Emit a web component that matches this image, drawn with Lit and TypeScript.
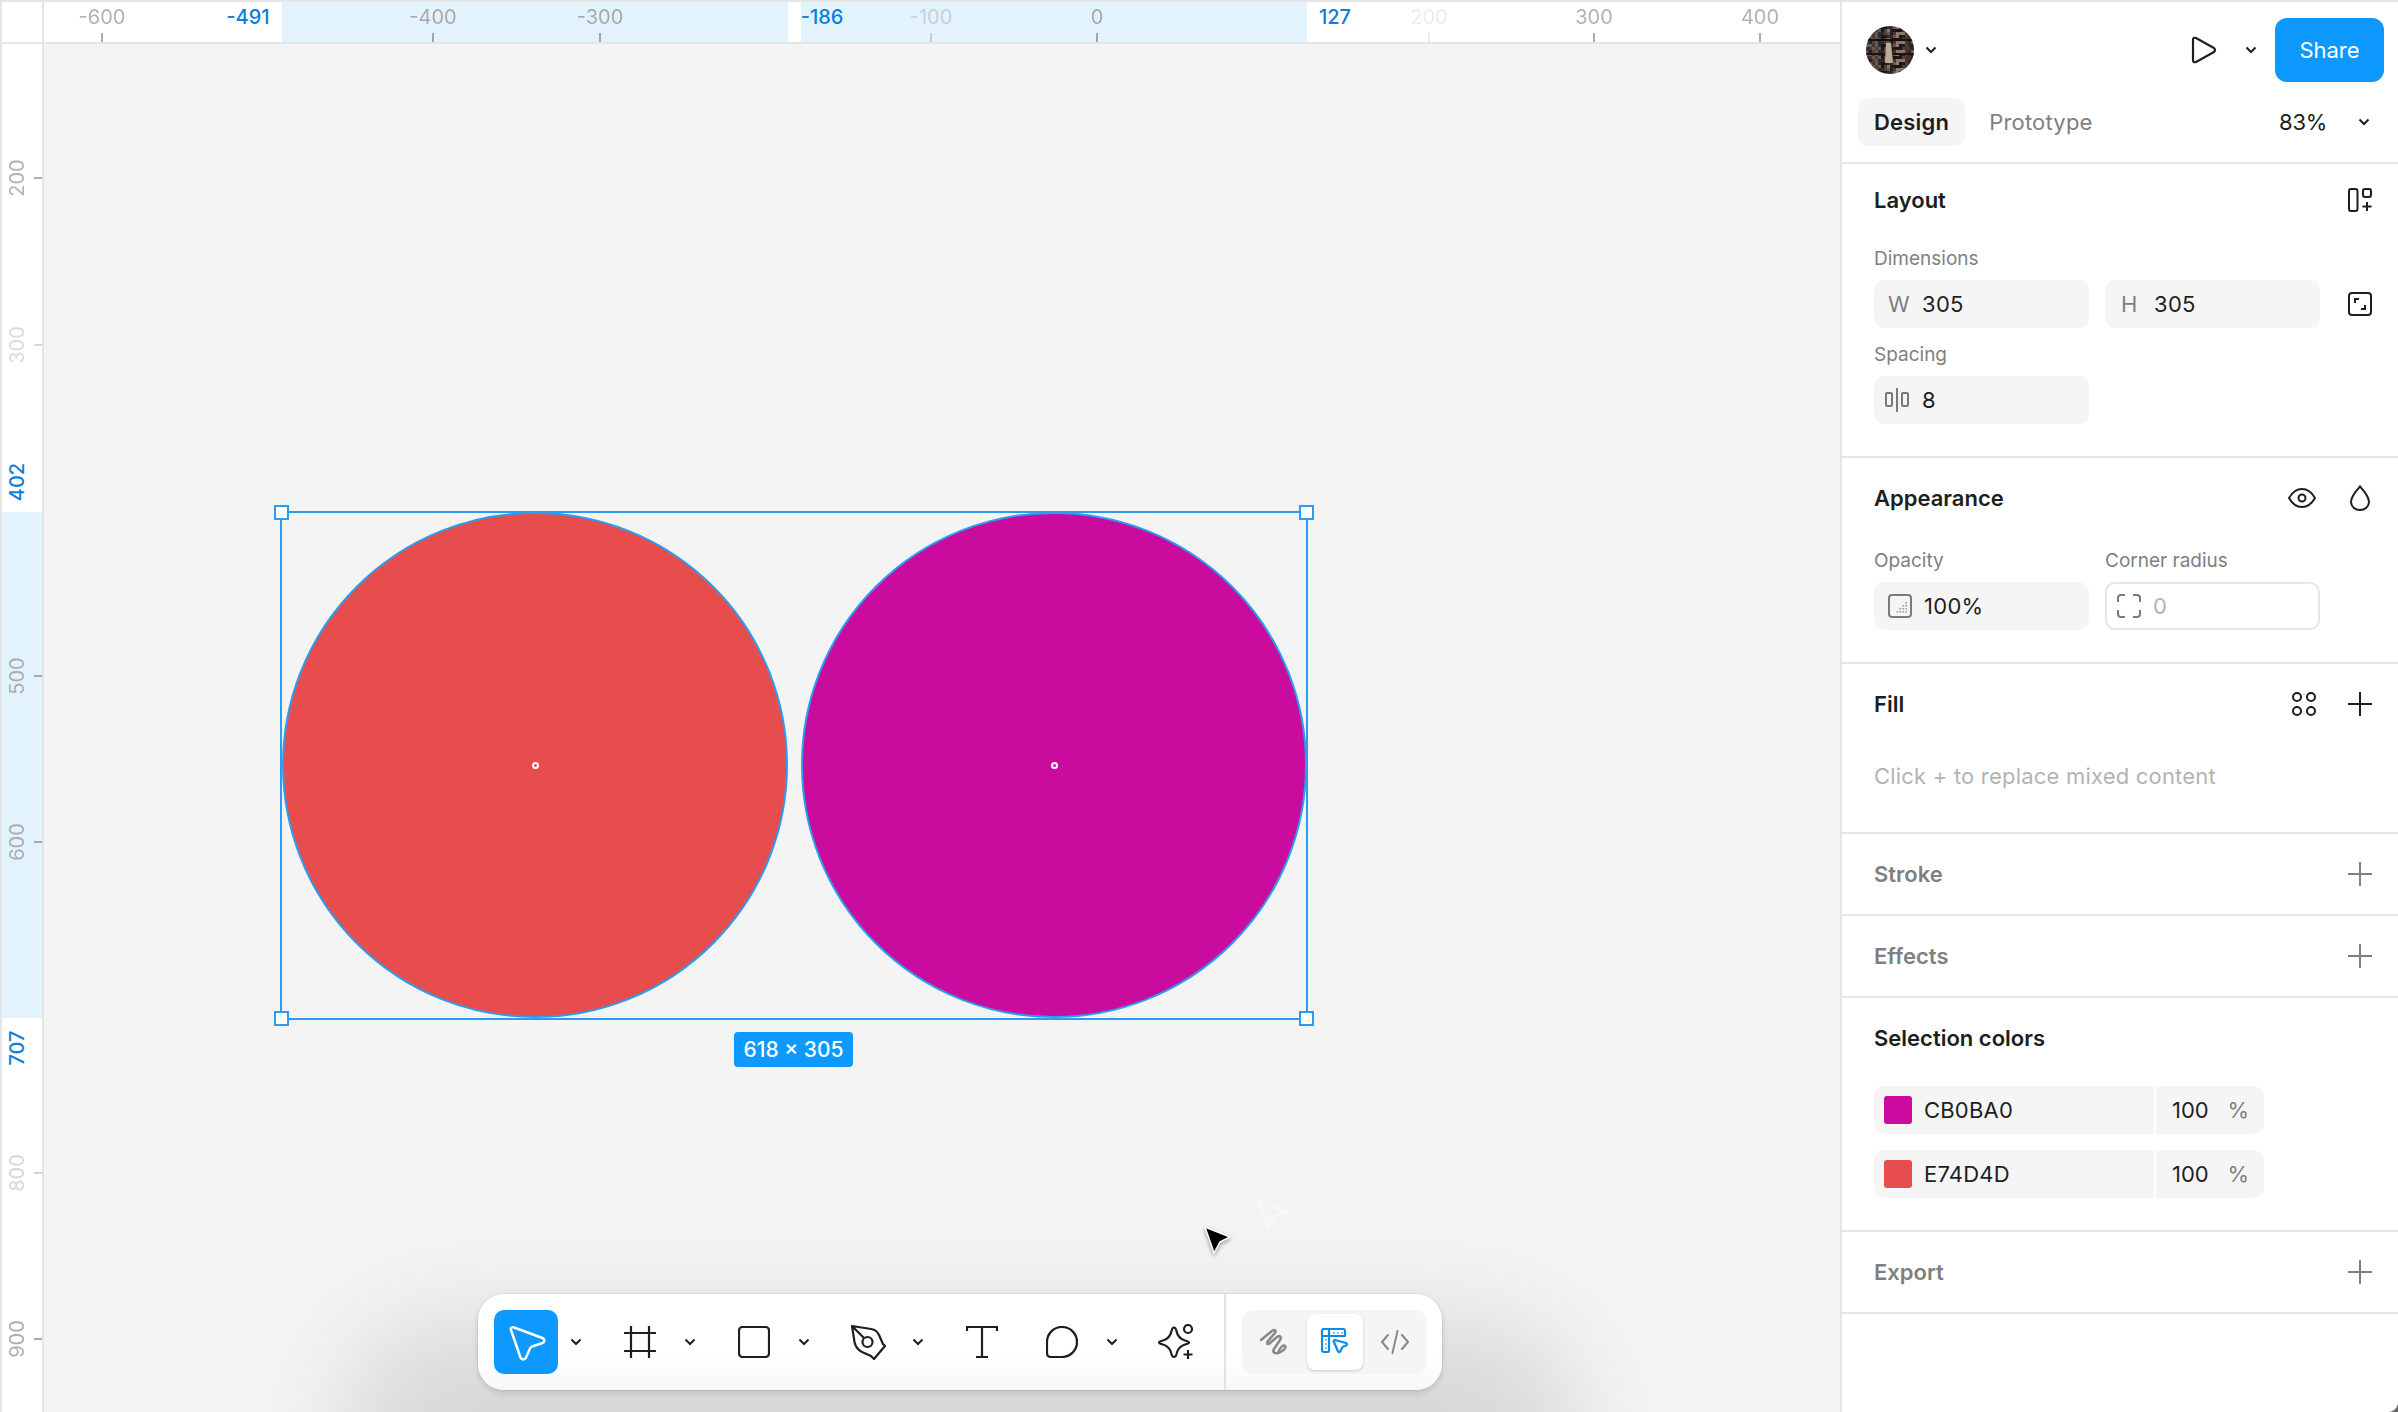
import { LitElement, css, html, svg } from "lit";
import { customElement } from "lit/decorators.js";

const chevron = html`<svg class="chev" width="12" height="8" viewBox="0 0 12 8"><path d="M1.5 1.5 6 6l4.5-4.5" /></svg>`;
const plus = html`<svg class="ico" width="24" height="24" viewBox="0 0 24 24"><path d="M12 0v24M0 12h24" /></svg>`;
const plusDim = html`<svg class="ico dim" width="24" height="24" viewBox="0 0 24 24"><path d="M12 0v24M0 12h24" /></svg>`;

// [value, x or y in page pixels, opacity]
const topTicks: [string, number, number][] = [
  ["-600", 102, 0.85],
  ["-400", 433, 0.95],
  ["-300", 600, 0.95],
  ["-100", 931, 0.45],
  ["0", 1097, 0.95],
  ["200", 1429, 0.2],
  ["300", 1594, 0.85],
  ["400", 1760, 0.85],
];
const topMarks: [string, number][] = [
  ["-491", 248],
  ["-186", 822],
  ["127", 1335],
];
const leftTicks: [string, number, number][] = [
  ["200", 178, 0.85],
  ["300", 345, 0.4],
  ["500", 676, 0.9],
  ["600", 842, 0.9],
  ["800", 1173, 0.45],
  ["900", 1339, 0.9],
];
const leftMarks: [string, number][] = [
  ["402", 482],
  ["707", 1048],
];

// little bookshelf picture for the avatar
const shelfColors = ["#5a3c30", "#232122", "#7a5547", "#2f2c2e", "#8c776b", "#191718", "#4c342b", "#5f5a57"];
const shelfBits = (() => {
  const out = [];
  let seed = 7;
  for (let y = 0; y < 48; y += 3) {
    for (let x = 0; x < 48; x += 3) {
      seed = (seed * 31 + 11) % 97;
      out.push(svg`<rect x=${x} y=${y} width="3" height="3" fill=${shelfColors[seed % 8]} />`);
    }
  }
  return out;
})();

const opacityDots = (() => {
  const out = [];
  for (let r = 0; r < 4; r++) {
    for (let c = 0; c <= r; c++) {
      out.push(svg`<rect class="dot" x=${17.5 - c * 3} y=${8 + r * 3} width="1.6" height="1.6" />`);
    }
  }
  return out;
})();

@customElement("app-root")
export class AppRoot extends LitElement {
  render() {
    return html`
      <div class="app">
        <div class="work">
          <div class="corner"></div>
          ${this.renderTopRuler()} ${this.renderLeftRuler()}
          <div class="canvas">
            <div class="circle red"></div>
            <div class="circle purple"></div>
            <div class="center-dot" style="left:488px;top:718px"></div>
            <div class="center-dot" style="left:1007px;top:718px"></div>
            <div class="sel"></div>
            ${[
              [230, 461],
              [1255, 461],
              [230, 967],
              [1255, 967],
            ].map(([l, t]) => html`<div class="handle" style="left:${l}px;top:${t}px"></div>`)}
            <div class="size">618 × 305</div>
            <svg class="ghost" width="32" height="30" viewBox="0 0 32 30">
              <path d="M2 2 30 11 18 16 13 28Z" />
            </svg>
            <svg class="cursor" width="27" height="28" viewBox="0 0 27 28">
              <path d="M1 1 26 11 16 16 10 27Z" />
            </svg>
            ${this.renderToolbar()}
          </div>
        </div>
        ${this.renderPanel()}
      </div>
      <div class="win-corner"></div>
    `;
  }

  renderTopRuler() {
    return html`<div class="ruler top">
      <div class="band" style="left:238px;width:506px"></div>
      <div class="band" style="left:757px;width:506px"></div>
      ${topTicks.map(
        ([v, x, o]) => html`
          <span class="num" style="left:${x - 44}px;opacity:${o}">${v}</span>
          <i class="tick" style="left:${x - 45}px;opacity:${o}"></i>
        `,
      )}
      ${topMarks.map(([v, x]) => html`<span class="num mark" style="left:${x - 44}px">${v}</span>`)}
    </div>`;
  }

  renderLeftRuler() {
    return html`<div class="ruler left">
      <div class="band" style="top:468px;height:506px"></div>
      ${leftTicks.map(
        ([v, y, o]) => html`
          <span class="num" style="top:${y - 44}px;opacity:${o}">${v}</span>
          <i class="tick" style="top:${y - 45}px;opacity:${o}"></i>
        `,
      )}
      ${leftMarks.map(([v, y]) => html`<span class="num mark" style="top:${y - 44}px">${v}</span>`)}
    </div>`;
  }

  renderToolbar() {
    return html`<div class="toolbar">
      <div class="tools">
        <div class="tool move">
          <svg width="64" height="64" viewBox="0 0 64 64">
            <path
              d="M17 20c-1-2 1-3.500 3-2.500L48.500 28c2.500 1 2.500 4 0 5L38 36.500c-1 .5-1.500 1-2 2l-4 9c-1 2.500-4.500 2.500-5.500 0Z"
            />
          </svg>
        </div>
        <div class="drop">${chevron}</div>
        <div class="tool">
          <svg class="ti" width="32" height="32" viewBox="0 0 32 32">
            <path d="M7 0v32M25 0v32M0 7h32M0 25h32" />
          </svg>
        </div>
        <div class="drop">${chevron}</div>
        <div class="tool">
          <svg class="ti" width="32" height="32" viewBox="0 0 32 32"><rect x="1" y="1" width="30" height="30" rx="3.500" /></svg>
        </div>
        <div class="drop">${chevron}</div>
        <div class="tool">
          <svg class="ti" width="36" height="36" viewBox="0 0 36 36">
            <path d="M2 2 21 5q6 1 8 6l4 9 2 2-11 13-3-3-9-4q-6-3-7.500-10ZM2 2l12 12" />
            <circle cx="17.500" cy="18" r="5" />
          </svg>
        </div>
        <div class="drop">${chevron}</div>
        <div class="tool">
          <svg class="ti" width="32" height="32" viewBox="0 0 32 32"><path d="M1 5V1h30v4M16 1v30M10 31h12" /></svg>
        </div>
        <div class="gap"></div>
        <div class="tool">
          <svg class="ti" width="32" height="32" viewBox="0 0 32 32">
            <path d="M16 1a15 15 0 0 1 0 30H5q-4 0-4-4V16A15 15 0 0 1 16 1Z" />
          </svg>
        </div>
        <div class="drop">${chevron}</div>
        <div class="tool">
          <svg class="ti" width="36" height="36" viewBox="0 0 36 36">
            <path
              d="M16 3.500c1.500 0 2 1.500 2.500 3.500 1 5 3.500 8 8.500 9.500 2 .5 4 1 4 2s-2 1.500-4 2c-5 1.500-7.500 4.500-8.500 9.500-.5 2-1 3-2.500 3s-2-1-2.500-3c-1-5-3.500-8-8.500-9.500-2-.5-4-1-4-2s2-1.500 4-2c5-1.500 7.500-4.500 8.500-9.500.5-2 1-3.500 2.500-3.500Z"
            />
            <circle cx="30" cy="5" r="4" />
            <path d="M30 26v9M25.500 30.500h9" />
          </svg>
        </div>
      </div>
      <div class="modes">
        <div class="mode">
          <svg class="mi" width="28" height="28" viewBox="0 0 28 28">
            <path
              d="M1 12 12 3c3-2 5 0 2 3L8 13c-2 3 0 4 2 2l7-6c3-2 5 0 3 3l-6 9c-2 3 1 5 4 4 4-1 9-5 7-7s-6 3-7 7"
            />
          </svg>
        </div>
        <div class="mode on">
          <svg width="28" height="28" viewBox="0 0 28 28">
            <path class="bl" d="M3 1h19q2 0 2 2v5H8v15q0 1-1 1H3q-2 0-2-2V3q0-2 2-2ZM1 8h7M8 1v7" />
            <path class="bl" d="M13 4.500v1M17 4.500v1M21 4.500v1M4.500 12h1M4.500 16h1M4.500 20h1" />
            <path class="bl" d="M13 14q-1-2 1-2l11 3q2 1 0 2.500l-3.500 1.500-2 4q-1 2-2.500.5Z" />
          </svg>
        </div>
        <div class="mode">
          <svg class="mi thin" width="28" height="24" viewBox="0 0 28 24"><path d="M7 5 1 12l6 7M21 5l6 7-6 7M16.500 1l-5 22" /></svg>
        </div>
      </div>
    </div>`;
  }

  renderPanel() {
    return html`<aside class="panel">
      <div class="head">
        <div class="row-a">
          <svg class="avatar" width="48" height="48" viewBox="0 0 48 48">
            ${shelfBits}
            <rect x="0" y="13" width="48" height="2" fill="#111" />
            <rect x="0" y="27" width="48" height="2" fill="#161416" />
            <path d="M20 17h5l2 20h-8Z" fill="#b9ad9a" />
          </svg>
          <span class="a-chev">${chevron}</span>
          <span class="fill"></span>
          <svg class="ti play" width="26" height="28" viewBox="0 0 26 28">
            <path d="M2 4q0-3 3-2l18 10q2 2 0 4L5 26q-3 1-3-2Z" />
          </svg>
          <span class="p-chev">${chevron}</span>
          <button class="share">Share</button>
        </div>
        <div class="row-b">
          <span class="tab on">Design</span>
          <span class="tab">Prototype</span>
          <span class="fill"></span>
          <span class="zoom">83%</span>
          <span class="z-chev">${chevron}</span>
        </div>
      </div>

      <section class="layout">
        <div class="title">
          <span>Layout</span>
          <svg class="ico" width="24" height="24" viewBox="0 0 24 24">
            <rect x="1" y="1" width="8.500" height="22" rx="2" />
            <rect x="15" y="1" width="8" height="8" rx="2" />
            <path d="M19 14v9M14.500 18.500h9" />
          </svg>
        </div>
        <div class="lab first">Dimensions</div>
        <div class="fields">
          <div class="field"><span class="pre">W</span><span>305</span></div>
          <div class="field h"><span class="pre">H</span><span>305</span></div>
          <svg class="ico side" width="24" height="24" viewBox="0 0 24 24">
            <rect x="1" y="1" width="22" height="22" rx="3" />
            <path d="M7 11V7h4M17 13v4h-4" />
          </svg>
        </div>
        <div class="lab">Spacing</div>
        <div class="fields">
          <div class="field icon gap-icon">
            <svg class="ico grey" width="26" height="24" viewBox="0 0 26 24">
              <rect x="1" y="5" width="6" height="13" rx="1" />
              <path d="M12 0v24" />
              <rect x="17" y="5" width="6" height="13" rx="1" />
            </svg>
            <span>8</span>
          </div>
        </div>
      </section>

      <section class="appearance">
        <div class="title">
          <span>Appearance</span>
          <span class="acts wide">
            <svg class="ico" width="28" height="20" viewBox="0 0 28 20">
              <path d="M1 10C5 3 10 1 14 1s9 2 13 9c-4 7-9 9-13 9S5 17 1 10Z" />
              <circle cx="14" cy="10" r="3.500" />
            </svg>
            <svg class="ico" width="20" height="26" viewBox="0 0 20 26">
              <path d="M10 1.500C13 5 19 11 19 17a9 8 0 0 1-18 0C1 11 7 5 10 1.500Z" />
            </svg>
          </span>
        </div>
        <div class="labs"><span class="lab">Opacity</span><span class="lab">Corner radius</span></div>
        <div class="fields">
          <div class="field icon">
            <svg class="ico grey" width="24" height="24" viewBox="0 0 24 24">
              <rect x="1" y="1" width="22" height="22" rx="3" />
              ${opacityDots}
            </svg>
            <span>100%</span>
          </div>
          <div class="field outline">
            <svg class="ico grey" width="24" height="24" viewBox="0 0 24 24">
              <path d="M1 8V4q0-3 3-3h4M16 1h4q3 0 3 3v4M23 16v4q0 3-3 3h-4M8 23H4q-3 0-3-3v-4" />
            </svg>
            <span class="zero">0</span>
          </div>
        </div>
      </section>

      <section class="fills">
        <div class="title">
          <span>Fill</span>
          <span class="acts">
            <svg class="ico" width="24" height="24" viewBox="0 0 24 24">
              <circle cx="5" cy="5" r="4" />
              <circle cx="19" cy="5" r="4" />
              <circle cx="5" cy="19" r="4" />
              <circle cx="19" cy="19" r="4" />
            </svg>
            ${plus}
          </span>
        </div>
        <div class="hint">Click + to replace mixed content</div>
      </section>

      <section class="closed">
        <div class="title off"><span>Stroke</span>${plusDim}</div>
      </section>
      <section class="closed">
        <div class="title off"><span>Effects</span>${plusDim}</div>
      </section>

      <section class="colors">
        <div class="title"><span>Selection colors</span></div>
        ${[
          ["#cb0ba0", "CB0BA0"],
          ["#e74d4d", "E74D4D"],
        ].map(
          ([c, name]) => html`<div class="color">
            <span class="hex"><i class="swatch" style="background:${c}"></i>${name}</span>
            <span class="pct"><span>100</span><span class="sign">%</span></span>
          </div>`,
        )}
      </section>

      <section class="closed">
        <div class="title off"><span>Export</span>${plusDim}</div>
      </section>
    </aside>`;
  }

  static styles = css`
    :host {
      display: block;
      position: relative;
      width: 2398px;
      height: 1412px;
      overflow: hidden;
      font-family: Inter, "Liberation Sans", sans-serif;
      color: #1e1e1e;
      background: #fff;
    }
    .app {
      display: grid;
      grid-template-columns: 1838px 558px;
      height: 1410px;
      border-top: 2px solid #e5e5e5;
      border-left: 2px solid #e5e5e5;
    }
    .work {
      display: grid;
      grid-template-columns: 42px 1796px;
      grid-template-rows: 42px 1368px;
      overflow: hidden;
    }
    .corner {
      border-right: 2px solid #e5e5e5;
      border-bottom: 2px solid #e5e5e5;
    }

    /* rulers */
    .ruler {
      position: relative;
      background: #fff;
      overflow: hidden;
      font-size: 20px;
      color: #a6a6a6;
    }
    .ruler.top {
      border-bottom: 2px solid #e5e5e5;
    }
    .ruler.left {
      border-right: 2px solid #e5e5e5;
    }
    .band {
      position: absolute;
      background: #e3f3fd;
    }
    .ruler.top .band {
      top: 0;
      bottom: 0;
    }
    .ruler.left .band {
      left: 0;
      right: 0;
    }
    .num {
      position: absolute;
      line-height: 24px;
      white-space: nowrap;
    }
    .ruler.top .num {
      top: 3px;
      transform: translateX(-50%);
    }
    .ruler.left .num {
      left: 15px;
      transform: translate(-50%, -50%) rotate(-90deg);
    }
    .mark {
      color: #0c7fdc;
      font-weight: 500;
    }
    .tick {
      position: absolute;
      background: #a0a0a0;
    }
    .ruler.top .tick {
      top: 31px;
      width: 2px;
      height: 9px;
    }
    .ruler.left .tick {
      left: 32px;
      width: 8px;
      height: 2px;
    }

    /* canvas */
    .canvas {
      position: relative;
      background: #f4f4f4;
      overflow: hidden;
    }
    .circle {
      position: absolute;
      top: 468px;
      width: 506px;
      height: 506px;
      box-sizing: border-box;
      border-radius: 50%;
      border: 2.500px solid #2d9cf0;
    }
    .red {
      left: 238px;
      background: #e74d4d;
    }
    .purple {
      left: 757px;
      background: #c90b9e;
    }
    .center-dot {
      position: absolute;
      width: 7px;
      height: 7px;
      box-sizing: border-box;
      border: 2px solid #fff;
      border-radius: 50%;
    }
    .sel {
      position: absolute;
      left: 236px;
      top: 467px;
      width: 1028px;
      height: 509px;
      box-sizing: border-box;
      border: 2px solid #2d9cf0;
    }
    .handle {
      position: absolute;
      width: 15px;
      height: 15px;
      box-sizing: border-box;
      background: #fff;
      border: 2.500px solid #2d9cf0;
    }
    .size {
      position: absolute;
      left: 690px;
      top: 988px;
      width: 119px;
      height: 35px;
      border-radius: 4px;
      background: #0d99ff;
      color: #fff;
      font-size: 21px;
      font-weight: 500;
      line-height: 35px;
      text-align: center;
    }
    .cursor {
      position: absolute;
      left: 1160px;
      top: 1182px;
      filter: drop-shadow(0 2px 2px rgba(0, 0, 0, 0.35));
    }
    .cursor path {
      fill: #000;
      stroke: #fff;
      stroke-width: 1.500;
      stroke-linejoin: round;
    }
    .ghost {
      position: absolute;
      left: 1212px;
      top: 1156px;
    }
    .ghost path {
      fill: none;
      stroke: rgba(255, 255, 255, 0.5);
      stroke-width: 1.500;
    }

    /* toolbar */
    .toolbar {
      position: absolute;
      left: 434px;
      top: 1250px;
      width: 964px;
      height: 96px;
      display: flex;
      border-radius: 26px;
      background: linear-gradient(#fff 60%, #f8f8f8);
      box-shadow:
        0 0 0 1px rgba(0, 0, 0, 0.05),
        0 3px 6px rgba(0, 0, 0, 0.12),
        0 160px 110px 130px rgba(0, 0, 0, 0.12);
    }
    .tools {
      width: 748px;
      flex: none;
      display: flex;
      align-items: center;
      padding-left: 16px;
      border-right: 2px solid #e3e3e3;
      box-sizing: border-box;
    }
    .tool {
      width: 64px;
      height: 64px;
      display: flex;
      align-items: center;
      justify-content: center;
      flex: none;
    }
    .tool.move {
      background: #0d99ff;
      border-radius: 10px;
    }
    .move path {
      fill: none;
      stroke: #fff;
      stroke-width: 2.500;
      stroke-linejoin: round;
    }
    .drop {
      width: 50px;
      flex: none;
      display: flex;
      box-sizing: border-box;
      padding-left: 12px;
    }
    .gap {
      width: 16px;
      flex: none;
    }
    .ti,
    .mi {
      fill: none;
      stroke: #1e1e1e;
      stroke-width: 2.200;
      stroke-linejoin: round;
    }
    .mi {
      stroke: #888;
      stroke-width: 2.500;
      stroke-linecap: round;
    }
    .mi.thin {
      stroke-width: 2;
    }
    .chev {
      fill: none;
      stroke: #1e1e1e;
      stroke-width: 2;
    }
    .modes {
      margin: 16px 0 0 16px;
      width: 185px;
      height: 64px;
      display: flex;
      align-items: center;
      justify-content: space-between;
      padding: 0 4px;
      box-sizing: border-box;
      border-radius: 12px;
      background: #f5f5f5;
    }
    .mode {
      width: 56px;
      height: 56px;
      display: flex;
      align-items: center;
      justify-content: center;
      border-radius: 8px;
    }
    .mode.on {
      background: #fff;
      box-shadow: 0 1px 3px rgba(0, 0, 0, 0.18);
    }
    .bl {
      fill: none;
      stroke: #0c8ce9;
      stroke-width: 2.200;
      stroke-linejoin: round;
    }

    /* right panel */
    .panel {
      border-left: 2px solid #e5e5e5;
      background: #fff;
      display: flex;
      flex-direction: column;
      font-size: 22px;
      box-sizing: border-box;
    }
    .head {
      height: 160px;
      border-bottom: 2px solid #e5e5e5;
    }
    .fill {
      flex: 1;
    }
    .row-a {
      height: 96px;
      display: flex;
      align-items: center;
      padding: 0 14px 0 24px;
      box-sizing: border-box;
    }
    .avatar {
      border-radius: 50%;
    }
    .a-chev {
      margin-left: 11px;
      display: flex;
    }
    .play {
      margin-right: 28px;
    }
    .p-chev {
      display: flex;
      margin-right: 18px;
    }
    .share {
      width: 109px;
      height: 64px;
      border: 0;
      border-radius: 12px;
      background: #0d99ff;
      color: #fff;
      font: 400 22px Inter, sans-serif;
      padding: 0;
    }
    .row-b {
      height: 48px;
      display: flex;
      align-items: center;
      padding: 0 28px 0 16px;
    }
    .tab {
      height: 48px;
      line-height: 48px;
      padding: 0 16px;
      border-radius: 10px;
      color: #7f7f7f;
      letter-spacing: 0.200px;
      margin-right: 8px;
    }
    .tab.on {
      background: #f5f5f5;
      color: #1e1e1e;
      font-weight: 600;
    }
    .zoom {
      margin-right: 31px;
      letter-spacing: -0.300px;
    }
    .z-chev {
      display: flex;
    }
    section {
      padding: 24px 26px 0 32px;
      border-bottom: 2px solid #e5e5e5;
    }
    .title {
      height: 32px;
      display: flex;
      align-items: center;
      justify-content: space-between;
      font-weight: 600;
    }
    .title.off {
      color: #7f7f7f;
    }
    .acts {
      display: flex;
      align-items: center;
      gap: 32px;
    }
    .acts.wide {
      gap: 34px;
      margin-right: 2px;
    }
    .ico {
      fill: none;
      stroke: #1e1e1e;
      stroke-width: 2;
      flex: none;
    }
    .ico.dim {
      stroke: #7f7f7f;
    }
    .ico.grey {
      stroke: #7a7a7a;
    }
    .ico .dot {
      fill: #9a9a9a;
      stroke: none;
    }
    .lab {
      height: 24px;
      line-height: 24px;
      margin-top: 15px;
      margin-bottom: 9px;
      font-size: 19px;
      color: #808080;
    }
    .lab.first {
      margin-top: 31px;
    }
    .layout {
      padding-top: 20px;
      padding-bottom: 32px;
    }
    .labs {
      display: grid;
      grid-template-columns: 215px 215px;
      column-gap: 16px;
      margin-top: 35px;
      height: 33px;
    }
    .labs .lab {
      margin: 0;
    }
    .fields {
      display: grid;
      grid-template-columns: 215px 215px 24px;
      column-gap: 16px;
      align-items: center;
    }
    .side {
      margin-left: 12px;
    }
    .field {
      height: 48px;
      display: flex;
      align-items: center;
      box-sizing: border-box;
      border-radius: 10px;
      background: #f5f5f5;
      padding-left: 14px;
      letter-spacing: 0.300px;
    }
    .field.h {
      padding-left: 16px;
    }
    .pre {
      width: 34px;
      color: #7f7f7f;
    }
    .field.h .pre {
      width: 33px;
    }
    .field.icon .ico {
      margin-right: 12px;
    }
    .field.gap-icon .ico {
      margin-left: -3px;
      margin-right: 11px;
    }
    .field.outline {
      background: #fff;
      border: 2px solid #e5e5e5;
      padding-left: 10px;
    }
    .field.outline .ico {
      margin-right: 12px;
    }
    .zero {
      color: #b3b3b3;
    }
    .appearance {
      padding-bottom: 32px;
    }
    .fills {
      padding-bottom: 40px;
    }
    .hint {
      margin-top: 40px;
      height: 32px;
      line-height: 32px;
      color: #b3b3b3;
      letter-spacing: 0.200px;
    }
    .closed {
      padding-bottom: 24px;
    }
    .colors {
      padding-bottom: 32px;
    }
    .colors .title {
      margin-bottom: 32px;
    }
    .color {
      width: 390px;
      height: 48px;
      display: grid;
      grid-template-columns: 280px 2px 1fr;
      border-radius: 10px;
      background: #f5f5f5;
      overflow: hidden;
      margin-bottom: 16px;
      background-image: linear-gradient(#fff, #fff);
      background-size: 2px 100%;
      background-position: 280px 0;
      background-repeat: no-repeat;
    }
    .color:last-child {
      margin-bottom: 0;
    }
    .hex {
      display: flex;
      align-items: center;
      padding-left: 10px;
      letter-spacing: 0.200px;
    }
    .swatch {
      width: 28px;
      height: 28px;
      border-radius: 3px;
      margin-right: 12px;
    }
    .pct {
      grid-column: 3;
      display: flex;
      align-items: center;
      justify-content: space-between;
      padding: 0 15px 0 16px;
    }
    .sign {
      color: #7f7f7f;
    }
    .win-corner {
      position: absolute;
      right: 0;
      bottom: 0;
      width: 10px;
      height: 10px;
      background: radial-gradient(circle at 0 0, transparent 9.500px, #6a6a6a 10.500px);
    }
  `;
}

declare global {
  interface HTMLElementTagNameMap {
    "app-root": AppRoot;
  }
}
